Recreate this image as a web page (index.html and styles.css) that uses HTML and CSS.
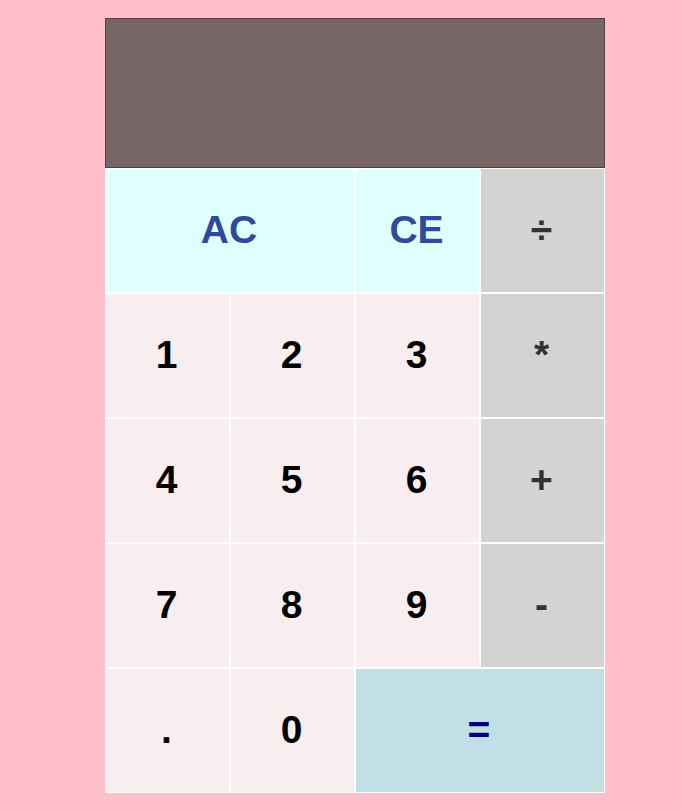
FILE: index.html
```html
<!DOCTYPE html>
<html>
<head>
<meta charset="utf-8">
<link rel="stylesheet" href="styles.css">
</head>
<body>
<div class="calc">
  <div class="display"></div>
  <div class="keys">
    <button class="key clear wide">AC</button>
    <button class="key clear">CE</button>
    <button class="key op">÷</button>
    <button class="key num">1</button>
    <button class="key num">2</button>
    <button class="key num">3</button>
    <button class="key op">*</button>
    <button class="key num">4</button>
    <button class="key num">5</button>
    <button class="key num">6</button>
    <button class="key op">+</button>
    <button class="key num">7</button>
    <button class="key num">8</button>
    <button class="key num">9</button>
    <button class="key op">-</button>
    <button class="key num">.</button>
    <button class="key num">0</button>
    <button class="key equals wide">=</button>
  </div>
</div>
</body>
</html>
```
FILE: styles.css
```css
html, body {
  margin: 0;
  background: #ffc0cb;
}
body {
  padding-top: 18px;
}
.calc {
  width: 500px;
  margin-left: 105px;
}
.display {
  box-sizing: border-box;
  height: 150px;
  background: #786667;
  border: 1px solid #4f4245;
}
.keys {
  display: grid;
  grid-template-columns: repeat(4, 125px);
  grid-auto-rows: 125px;
}
.key {
  box-sizing: border-box;
  margin: 0;
  padding: 0 2px 2px 0;
  border: 1px solid #ffffff;
  font-family: "Liberation Sans", Arial, sans-serif;
  font-weight: bold;
  font-size: 39px;
  line-height: 1;
  color: #000;
}
.wide {
  grid-column: span 2;
}
.num {
  background: #f8eef0;
}
.clear {
  background: #e0ffff;
  color: #2f4a9a;
}
.op {
  background: #d3d3d3;
  color: #333333;
}
.equals {
  background: #c3dfe6;
  color: #000080;
}
```
